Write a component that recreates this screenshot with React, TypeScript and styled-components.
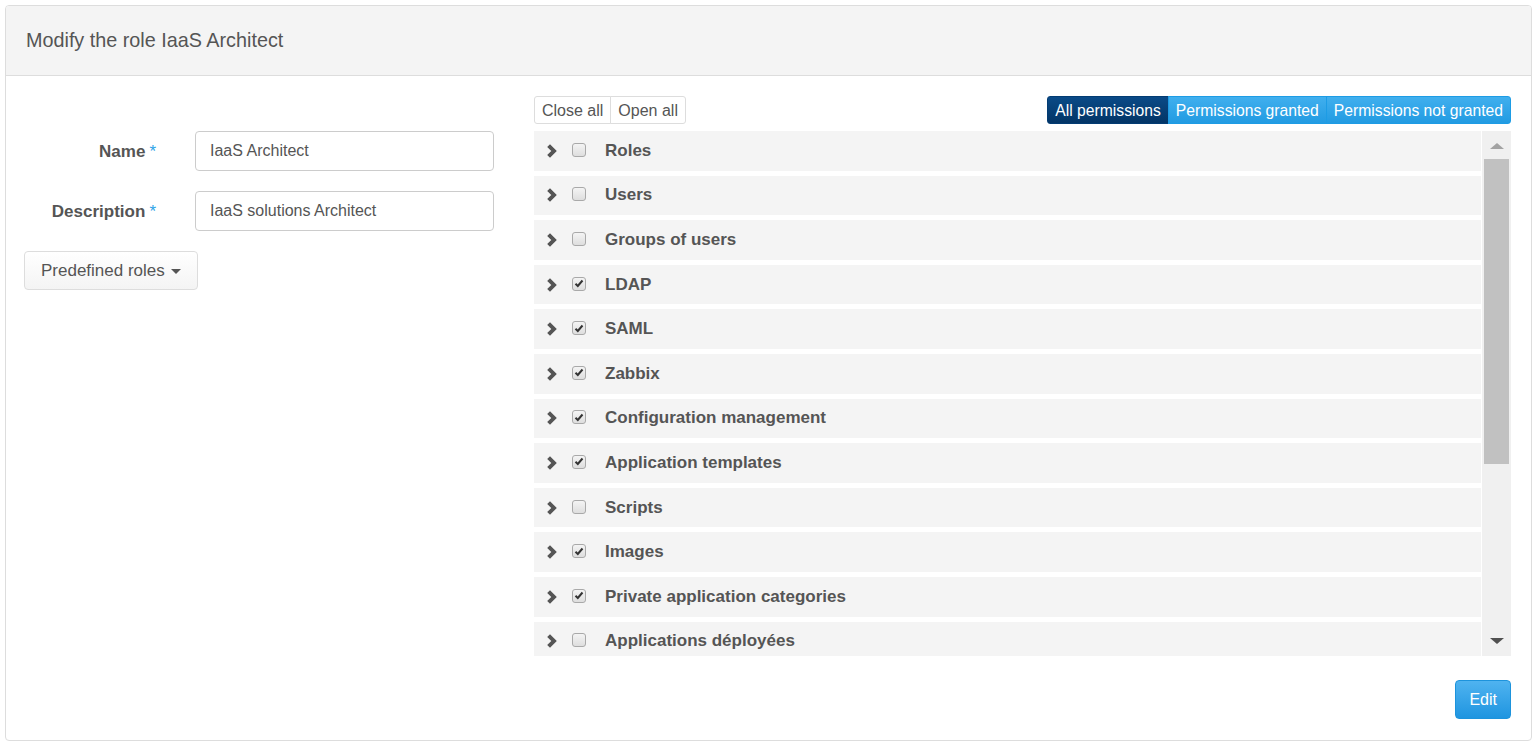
import React from 'react';
import styled, { createGlobalStyle } from 'styled-components';

const GlobalStyle = createGlobalStyle`
  html, body {
    margin: 0;
    padding: 0;
    background: #ffffff;
  }

  body {
    font-family: 'Liberation Sans', Arial, sans-serif;
    color: #555555;
  }
`;

const Page = styled.div`
  padding: 5px 6px 6px 5px;
`;

const Panel = styled.div`
  border: 1px solid #dddddd;
  border-radius: 4px;
  background: #ffffff;
  height: 736px;
  box-sizing: border-box;
  display: flex;
  flex-direction: column;
  overflow: hidden;
`;

const PanelHeader = styled.div`
  height: 70px;
  box-sizing: border-box;
  padding: 0 20px;
  display: flex;
  align-items: center;
  background: #f4f4f4;
  border-bottom: 1px solid #dddddd;
  font-size: 19.8px;
  color: #555555;
`;

const PanelBody = styled.div`
  flex: 1;
  padding: 20px 20px 20px 18px;
  display: flex;
  flex-direction: column;
`;

const Columns = styled.div`
  display: grid;
  grid-template-columns: 470px 1fr;
  column-gap: 40px;
`;

const FormColumn = styled.div`
  padding-top: 35px;
  display: flex;
  flex-direction: column;
`;

const FormRow = styled.div`
  display: grid;
  grid-template-columns: 132px 299px;
  column-gap: 39px;
  align-items: center;
  margin-bottom: 20px;
`;

const Label = styled.label`
  text-align: right;
  font-size: 17px;
  font-weight: bold;
  color: #555555;
  padding-top: 2px;
`;

const Required = styled.span`
  color: #2fa4e7;
  font-weight: normal;
  margin-left: 4px;
`;

const TextInput = styled.input`
  height: 40px;
  box-sizing: border-box;
  border: 1px solid #cccccc;
  border-radius: 4px;
  padding: 0 14px;
  font-family: 'Liberation Sans', Arial, sans-serif;
  font-size: 16px;
  color: #555555;
  outline: none;
`;

const DropdownButton = styled.button`
  align-self: flex-start;
  height: 39px;
  padding: 0 16px;
  display: flex;
  align-items: center;
  gap: 6px;
  border: 1px solid #dddddd;
  border-radius: 4px;
  background: linear-gradient(#ffffff, #f4f4f4);
  font-family: 'Liberation Sans', Arial, sans-serif;
  font-size: 17px;
  color: #555555;
  cursor: pointer;
`;

const Caret = styled.span`
  width: 0;
  height: 0;
  border-left: 5px solid transparent;
  border-right: 5px solid transparent;
  border-top: 5px solid #555555;
  margin-top: 1px;
`;

const ListColumn = styled.div`
  display: flex;
  flex-direction: column;
`;

const Toolbar = styled.div`
  display: flex;
  justify-content: space-between;
  align-items: flex-start;
  height: 28px;
  margin-bottom: 7px;
`;

const ButtonGroup = styled.div`
  display: flex;
`;

const GroupButton = styled.button<{ $variant: 'plain' | 'dark' | 'light' }>`
  height: 28px;
  padding: 1px 7px 0;
  font-family: 'Liberation Sans', Arial, sans-serif;
  font-size: ${(p) => (p.$variant === 'plain' ? '16px' : '15.7px')};
  cursor: pointer;
  border: 1px solid
    ${(p) => (p.$variant === 'plain' ? '#dddddd' : p.$variant === 'dark' ? '#033c73' : '#1d9ce5')};
  color: ${(p) => (p.$variant === 'plain' ? '#555555' : '#ffffff')};
  background: ${(p) =>
    p.$variant === 'plain'
      ? '#ffffff'
      : p.$variant === 'dark'
        ? 'linear-gradient(#0a4a87, #033566)'
        : 'linear-gradient(#40afee, #229be2)'};
  border-radius: 0;

  & + & {
    margin-left: -1px;
  }
  &:first-child {
    border-radius: 3px 0 0 3px;
  }
  &:last-child {
    border-radius: 0 3px 3px 0;
  }
`;

const ScrollBox = styled.div`
  height: 525px;
  display: flex;
`;

const RowList = styled.div`
  flex: 1;
  overflow: hidden;
`;

const PermissionRow = styled.div`
  height: 39.6px;
  margin-bottom: 5px;
  display: flex;
  align-items: center;
  padding-left: 13px;
  background: #f4f4f4;
`;

const Chevron = styled.svg`
  width: 10px;
  height: 14px;
  flex-shrink: 0;
`;

const Checkbox = styled.span<{ $checked: boolean }>`
  width: 12px;
  height: 12px;
  margin-left: 15px;
  margin-top: -2px;
  border: 1px solid #a9a9a9;
  border-radius: 3px;
  background: linear-gradient(#f4f4f4, #dedede);
  display: flex;
  align-items: center;
  justify-content: center;
  flex-shrink: 0;
`;

const RowLabel = styled.span`
  margin-left: 19px;
  font-size: 17px;
  font-weight: bold;
  color: #555555;
`;

const ScrollTrack = styled.div`
  width: 29px;
  margin-left: 1px;
  background: #f0f0f0;
  display: flex;
  flex-direction: column;
  align-items: center;
`;

const ArrowUp = styled.span`
  margin-top: 12px;
  width: 0;
  height: 0;
  border-left: 7px solid transparent;
  border-right: 7px solid transparent;
  border-bottom: 6px solid #a3a3a3;
`;

const ArrowDown = styled.span`
  margin-bottom: 12px;
  width: 0;
  height: 0;
  border-left: 7px solid transparent;
  border-right: 7px solid transparent;
  border-top: 6px solid #505050;
`;

const Thumb = styled.div`
  width: 25px;
  height: 305px;
  margin-top: 10px;
  background: #c1c1c1;
`;

const TrackSpace = styled.div`
  flex: 1;
`;

const Footer = styled.div`
  display: flex;
  justify-content: flex-end;
  margin-top: 24px;
`;

const EditButton = styled.button`
  height: 39px;
  padding: 0 13px;
  border: 1px solid #1d93dc;
  border-radius: 4px;
  background: linear-gradient(#4fb3f0, #1f95e0);
  color: #ffffff;
  font-family: 'Liberation Sans', Arial, sans-serif;
  font-size: 16px;
  cursor: pointer;
`;

const permissions = [
  { label: 'Roles', checked: false },
  { label: 'Users', checked: false },
  { label: 'Groups of users', checked: false },
  { label: 'LDAP', checked: true },
  { label: 'SAML', checked: true },
  { label: 'Zabbix', checked: true },
  { label: 'Configuration management', checked: true },
  { label: 'Application templates', checked: true },
  { label: 'Scripts', checked: false },
  { label: 'Images', checked: true },
  { label: 'Private application categories', checked: true },
  { label: 'Applications déployées', checked: false },
];

const ChevronIcon = () => (
  <Chevron viewBox="0 0 10 14">
    <polygon points="3,0.3 9.8,7 3,13.7 0.2,11 4.3,7 0.2,3" fill="#555555" />
  </Chevron>
);

const CheckMark = () => (
  <svg width="10" height="9" viewBox="0 0 10 9">
    <polyline points="1.5,4.8 3.8,7 8.5,1.5" fill="none" stroke="#333333" strokeWidth="2" />
  </svg>
);

const App = (): JSX.Element => {
  return (
    <>
      <GlobalStyle />
      <Page>
        <Panel>
          <PanelHeader>Modify the role IaaS Architect</PanelHeader>
          <PanelBody>
            <Columns>
              <FormColumn>
                <FormRow>
                  <Label>
                    Name<Required>*</Required>
                  </Label>
                  <TextInput defaultValue="IaaS Architect" />
                </FormRow>
                <FormRow>
                  <Label>
                    Description<Required>*</Required>
                  </Label>
                  <TextInput defaultValue="IaaS solutions Architect" />
                </FormRow>
                <DropdownButton>
                  Predefined roles <Caret />
                </DropdownButton>
              </FormColumn>

              <ListColumn>
                <Toolbar>
                  <ButtonGroup>
                    <GroupButton $variant="plain">Close all</GroupButton>
                    <GroupButton $variant="plain">Open all</GroupButton>
                  </ButtonGroup>
                  <ButtonGroup>
                    <GroupButton $variant="dark">All permissions</GroupButton>
                    <GroupButton $variant="light">Permissions granted</GroupButton>
                    <GroupButton $variant="light">Permissions not granted</GroupButton>
                  </ButtonGroup>
                </Toolbar>
                <ScrollBox>
                  <RowList>
                    {permissions.map((p) => (
                      <PermissionRow key={p.label}>
                        <ChevronIcon />
                        <Checkbox $checked={p.checked}>{p.checked && <CheckMark />}</Checkbox>
                        <RowLabel>{p.label}</RowLabel>
                      </PermissionRow>
                    ))}
                  </RowList>
                  <ScrollTrack>
                    <ArrowUp />
                    <Thumb />
                    <TrackSpace />
                    <ArrowDown />
                  </ScrollTrack>
                </ScrollBox>
              </ListColumn>
            </Columns>
            <Footer>
              <EditButton>Edit</EditButton>
            </Footer>
          </PanelBody>
        </Panel>
      </Page>
    </>
  );
};

export default App;
